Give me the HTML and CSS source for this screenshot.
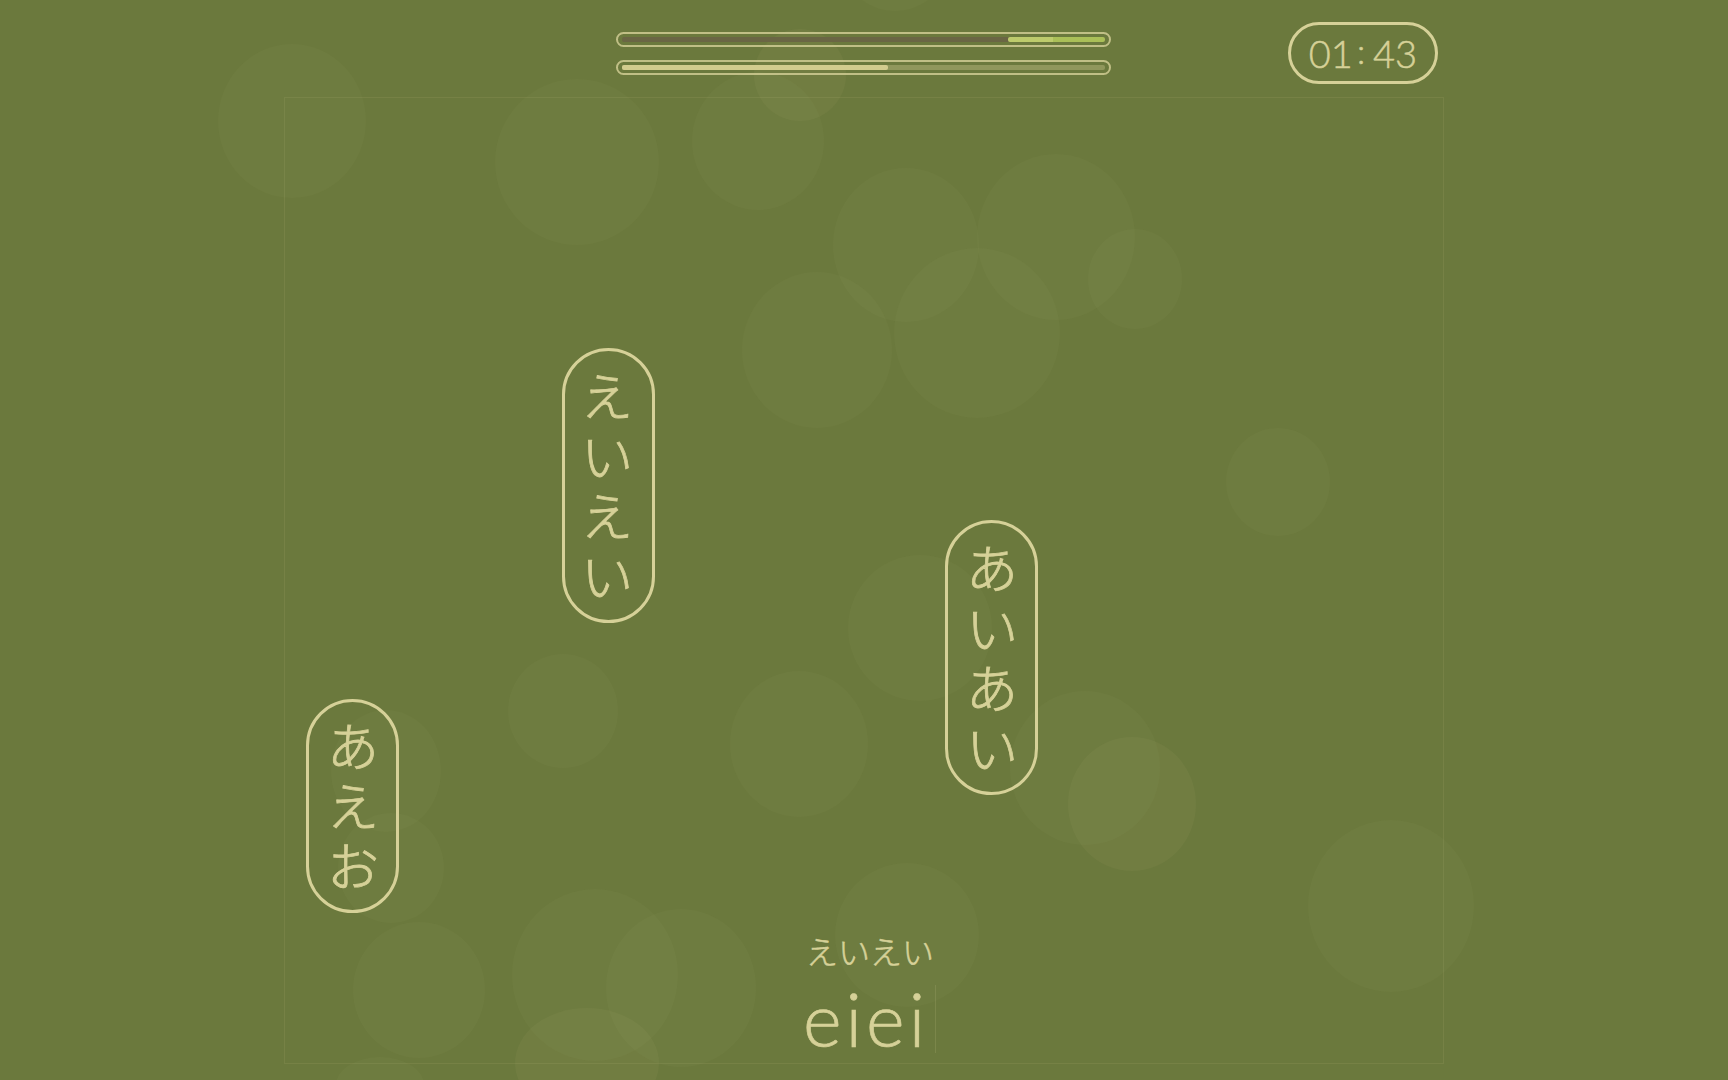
FILE: index.html
```html
<!DOCTYPE html>
<html lang="ja">

<head>
    <meta charset="UTF-8">
    <meta name="viewport" content="width=device-width, initial-scale=1.0">
    <title>Typing</title>
    <link rel="stylesheet" href="styles.css">
</head>

<body>
    <svg class="bubbles" width="1728" height="1080" viewBox="0 0 1728 1080" aria-hidden="true">
        <ellipse class="dim" cx="292" cy="121" rx="74" ry="77" />
        <ellipse class="dim" cx="577" cy="162" rx="82" ry="83" />
        <ellipse cx="758" cy="141" rx="66" ry="69" />
        <ellipse class="bright" cx="800" cy="75" rx="46" ry="46" />
        <ellipse class="dim" cx="895" cy="-22" rx="44" ry="33" />
        <ellipse cx="906" cy="245" rx="73" ry="77" />
        <ellipse class="dim" cx="1056" cy="237" rx="79" ry="83" />
        <ellipse class="dim" cx="977" cy="333" rx="83" ry="85" />
        <ellipse cx="1135" cy="279" rx="47" ry="50" />
        <ellipse cx="817" cy="350" rx="75" ry="78" />
        <ellipse class="dim" cx="1278" cy="482" rx="52" ry="54" />
        <ellipse class="dim" cx="920" cy="628" rx="72" ry="73" />
        <ellipse cx="563" cy="711" rx="55" ry="57" />
        <ellipse cx="799" cy="744" rx="69" ry="73" />
        <ellipse cx="1085" cy="768" rx="75" ry="77" />
        <ellipse class="bright" cx="1132" cy="804" rx="64" ry="67" />
        <ellipse class="dim" cx="386" cy="771" rx="55" ry="61" />
        <ellipse class="dim" cx="391" cy="868" rx="53" ry="55" />
        <ellipse cx="419" cy="990" rx="66" ry="68" />
        <ellipse class="dim" cx="595" cy="975" rx="83" ry="86" />
        <ellipse cx="681" cy="988" rx="75" ry="79" />
        <ellipse class="bright" cx="587" cy="1063" rx="72" ry="55" />
        <ellipse class="dim" cx="907" cy="935" rx="72" ry="72" />
        <ellipse class="dim" cx="1391" cy="906" rx="83" ry="86" />
        <ellipse class="dim" cx="380" cy="1085" rx="44" ry="28" />
    </svg>

    <main class="game">
        <header class="top">
            <div class="bars">
                <div class="bar">
                    <div class="track track-rest">
                        <div class="fill fill-rest"></div>
                    </div>
                </div>
                <div class="bar">
                    <div class="track track-done">
                        <div class="fill fill-done"></div>
                    </div>
                </div>
            </div>
            <div class="timer">01<span class="colon">:</span>43</div>
        </header>

        <section class="field">
            <div class="word word-one">えいえい</div>
            <div class="word word-two">あいあい</div>
            <div class="word word-three">あえお</div>

            <div class="answer">
                <div class="kana">えいえい</div>
                <div class="typed">eiei<span class="caret"></span></div>
            </div>
        </section>
    </main>
</body>

</html>
```

FILE: styles.css
```css
* {
    box-sizing: border-box;
}

body {
    margin: 0;
    width: 1728px;
    height: 1080px;
    overflow: hidden;
    position: relative;
    background-color: #6b793d;
    color: #d6d198;
    font-family: "Lato", "Noto Sans CJK JP", sans-serif;
}

.bubbles {
    position: absolute;
    left: 0;
    top: 0;
}

.bubbles ellipse {
    fill: #d6d198;
    fill-opacity: 0.04;
}

.bubbles .dim {
    fill-opacity: 0.03;
}

.bubbles .bright {
    fill-opacity: 0.055;
}

.game {
    position: relative;
    width: 1160px;
    margin: 0 auto;
}

.top {
    height: 97px;
    padding: 22px 6px 0 332px;
    display: flex;
    justify-content: space-between;
    align-items: flex-start;
}

.bars {
    width: 495px;
    padding-top: 10px;
    display: flex;
    flex-direction: column;
    gap: 13px;
}

.bar {
    height: 15px;
    padding: 3px 4px;
    border: 2px solid rgba(214, 209, 152, 0.8);
    border-radius: 8px;
}

.track {
    height: 100%;
    display: flex;
    border-radius: 2px;
}

.track-rest {
    justify-content: flex-end;
    background-color: #6a6644;
}

.track-done {
    background-color: rgba(214, 209, 152, 0.35);
}

.fill {
    height: 100%;
    border-radius: 2px;
}

.fill-rest {
    width: 20%;
    background: linear-gradient(to right, #bdcb6c 46%, #aabf58 46%);
}

.fill-done {
    width: 55%;
    background-color: #d2cc8e;
}

.timer {
    width: 150px;
    height: 62px;
    border: 3px solid #d6d198;
    border-radius: 31px;
    display: flex;
    align-items: center;
    justify-content: center;
    font-size: 38px;
    font-weight: 300;
    -webkit-text-stroke: 0.5px #d6d198;
}

.colon {
    font-size: 34px;
    margin: -6px 8px 0 4px;
}

.field {
    position: relative;
    height: 967px;
    border: 1px solid rgba(214, 209, 152, 0.1);
}

.word {
    position: absolute;
    width: 93px;
    padding-top: 8px;
    border: 3px solid #d6d198;
    border-radius: 47px;
    display: flex;
    align-items: center;
    justify-content: center;
    writing-mode: vertical-rl;
    white-space: nowrap;
    font-family: "Noto Sans CJK JP", sans-serif;
    font-size: 53px;
    font-weight: 300;
    line-height: 1;
    letter-spacing: 7px;
    -webkit-text-stroke: 0.8px #d6d198;
}

.word-one {
    left: 277px;
    top: 250px;
    height: 275px;
    padding-right: 4px;
}

.word-two {
    left: 660px;
    top: 422px;
    height: 275px;
}

.word-three {
    left: 21px;
    top: 601px;
    height: 214px;
}

.answer {
    position: absolute;
    left: 521px;
    bottom: 8px;
    width: 140px;
}

.kana {
    font-family: "Noto Sans CJK JP", sans-serif;
    font-size: 32px;
    font-weight: 300;
    line-height: 44px;
    margin-bottom: 11px;
    -webkit-text-stroke: 0.5px #d6d198;
}

.typed {
    display: flex;
    align-items: center;
    margin-left: -3px;
    font-size: 74px;
    font-weight: 300;
    line-height: 72px;
    letter-spacing: 4px;
    -webkit-text-stroke: 0.7px #d6d198;
}

.caret {
    width: 1px;
    height: 68px;
    margin-left: 6px;
    background-color: rgba(214, 209, 152, 0.15);
}
```
